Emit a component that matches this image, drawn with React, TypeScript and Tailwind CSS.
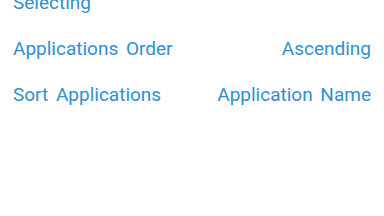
import React from 'react';

const rows = [
  { label: 'Applications Order', value: 'Ascending' },
  { label: 'Sort Applications', value: 'Application Name' },
];

export default function App() {
  return (
    <div className="w-[384px] h-[216px] bg-white overflow-hidden text-[#2f8fd3] text-[19px] leading-[22px] [font-family:Roboto,sans-serif] [word-spacing:3px]">
      <div className="px-[13px] -mt-[8px] mb-[12px] h-[22px]">Selecting</div>
      <div className="flex flex-col">
        {rows.map((r) => (
          <div key={r.label} className="flex justify-between items-center px-[13px] h-[46px]">
            <span>{r.label}</span>
            <span>{r.value}</span>
          </div>
        ))}
      </div>
    </div>
  );
}
